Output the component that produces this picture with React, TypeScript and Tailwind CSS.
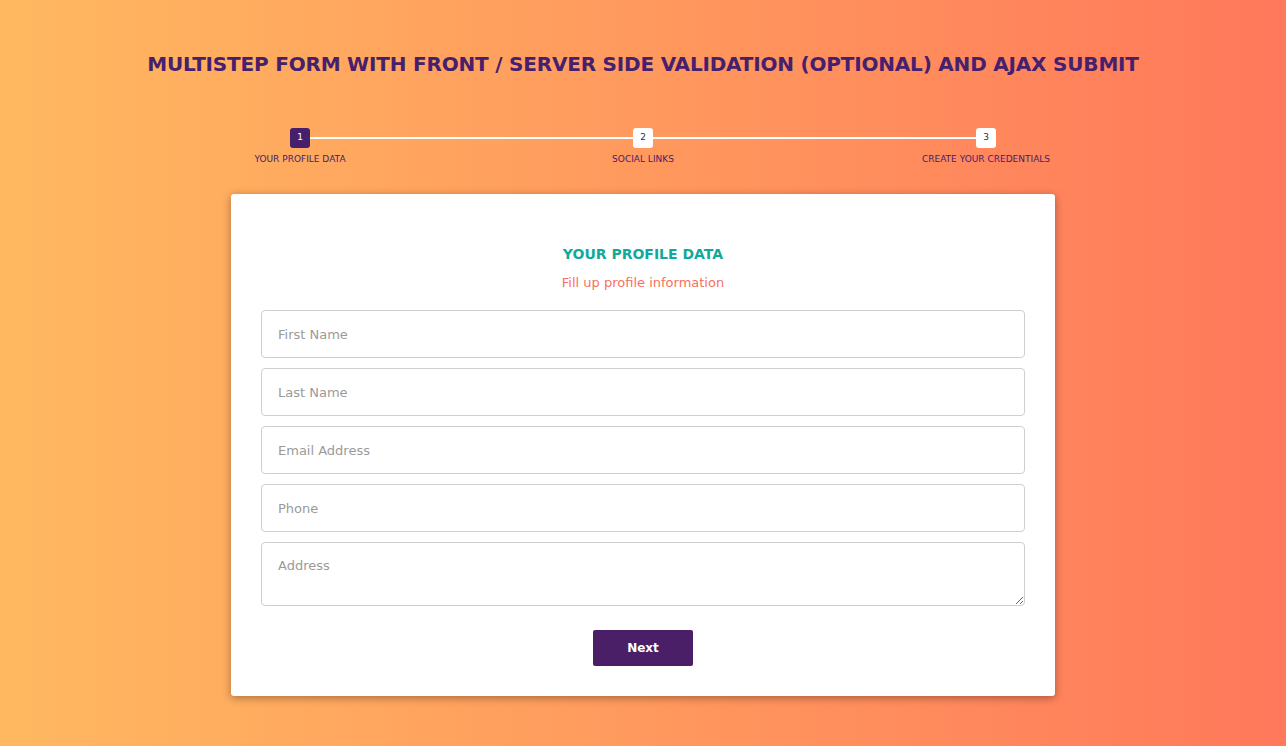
import React from 'react';

const steps = [
  { n: 1, label: 'YOUR PROFILE DATA', active: true },
  { n: 2, label: 'SOCIAL LINKS', active: false },
  { n: 3, label: 'CREATE YOUR CREDENTIALS', active: false },
];

const fields = ['First Name', 'Last Name', 'Email Address', 'Phone'];

export default function App() {
  return (
    <div
      className="min-h-[746px] w-full bg-gradient-to-r from-[#ffb860] to-[#ff785b] pt-[50px]"
      style={{ fontFamily: '"DejaVu Sans", "Noto Sans", sans-serif' }}
    >
      {/* Title */}
      <h1 className="text-center text-[20px] leading-[28px] font-semibold text-[#46206c] tracking-[-0.2px]">
        MULTISTEP FORM WITH FRONT / SERVER SIDE VALIDATION (OPTIONAL) AND AJAX SUBMIT
      </h1>

      {/* Progress */}
      <div className="relative mx-auto mt-[50px] w-[1029px]">
        <div className="absolute left-[171px] right-[171px] top-[9px] h-[2px] bg-white" />
        <div className="relative grid grid-cols-3">
          {steps.map(s => (
            <div key={s.n} className="flex flex-col items-center">
              <div
                className={`flex h-[20px] w-[20px] items-center justify-center rounded-[3px] text-[9px] ${
                  s.active ? 'bg-[#46206c] text-white' : 'bg-white text-[#333]'
                }`}
              >
                {s.n}
              </div>
              <span className="mt-[6px] text-[9px] leading-[10px] text-[#46206c]">{s.label}</span>
            </div>
          ))}
        </div>
      </div>

      {/* Card */}
      <div className="mx-auto mt-[30px] w-[824px] rounded-[3px] bg-white px-[30px] pt-[49px] pb-[30px] shadow-[0_2px_8px_rgba(0,0,0,0.35)]">
        <h2 className="text-center text-[14px] leading-[22px] font-semibold text-[#11a99a]">YOUR PROFILE DATA</h2>
        <p className="mt-[10px] text-center text-[13px] leading-[16px] text-[#f7705e]">Fill up profile information</p>

        <div className="mt-[19px] flex flex-col gap-[10px]">
          {fields.map(f => (
            <input
              key={f}
              placeholder={f}
              className="h-[48px] w-full rounded-[4px] border border-[#cfcfcf] px-[16px] text-[13px] text-[#333] outline-none placeholder:text-[#9a9a9a]"
            />
          ))}
          <textarea
            placeholder="Address"
            className="block h-[64px] w-full rounded-[4px] border border-[#cfcfcf] px-[16px] pt-[15px] text-[13px] leading-[16px] text-[#333] outline-none placeholder:text-[#9a9a9a]"
          />
        </div>

        <div className="mt-[24px] flex justify-center">
          <button className="h-[36px] w-[100px] rounded-[2px] bg-[#4a1f68] text-[12px] font-bold text-white">Next</button>
        </div>
      </div>
    </div>
  );
}
